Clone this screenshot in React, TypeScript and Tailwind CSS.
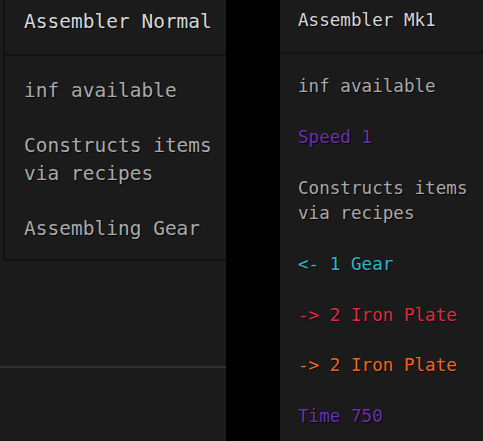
import React from "react";

const mono = { fontFamily: '"DejaVu Sans Mono", "Liberation Mono", monospace' };

export default function App() {
  return (
    <div className="flex h-[441px] w-[483px] overflow-hidden bg-black" style={mono}>
      {/* Left column */}
      <div className="flex w-[226px] shrink-0 flex-col overflow-hidden bg-[#1b1b1b] [text-shadow:1px_1px_0_#050505]">
        <div className="ml-[3px] w-[260px] shrink-0 border-b-[2px] border-l-[2px] border-[#121212]">
          <div className="h-[54px] pl-[19px] pt-[8px] text-[19.5px] leading-[28px] text-[#d6d6d6] whitespace-nowrap">
            Assembler Normal
          </div>
          <div className="flex flex-col gap-[27px] border-t-[2px] border-[#121212] pb-[16px] pl-[19px] pt-[21px] text-[19.5px] leading-[28px] text-[#a9a9a9]">
            <div>inf available</div>
            <div className="w-[190px]">Constructs items via recipes</div>
            <div className="whitespace-nowrap">Assembling Gear</div>
          </div>
        </div>
        <div className="h-[105px] shrink-0" />
        <div className="h-[2px] shrink-0 bg-[#323232]" />
      </div>
      {/* Gap */}
      <div className="w-[54px] shrink-0 bg-black" />
      {/* Right column */}
      <div className="flex flex-1 flex-col bg-[#1b1b1b] text-[17.6px] leading-[25px] [text-shadow:1px_1px_0_#050505]">
        <div className="h-[52px] pl-[18px] pt-[8px] text-[#d6d6d6] whitespace-nowrap">Assembler Mk1</div>
        <div className="flex flex-col gap-[25.9px] border-t-[2px] border-[#121212] pl-[18px] pt-[20px] text-[#a9a9a9]">
          <div>inf available</div>
          <div className="text-[#6a30ad]">Speed 1</div>
          <div className="w-[180px]">Constructs items via recipes</div>
          <div className="text-[#2eb6c6]">&lt;- 1 Gear</div>
          <div className="text-[#e02b40] whitespace-nowrap">-&gt; 2 Iron Plate</div>
          <div className="text-[#f2661d] whitespace-nowrap">-&gt; 2 Iron Plate</div>
          <div className="text-[#6a30ad]">Time 750</div>
        </div>
      </div>
    </div>
  );
}
